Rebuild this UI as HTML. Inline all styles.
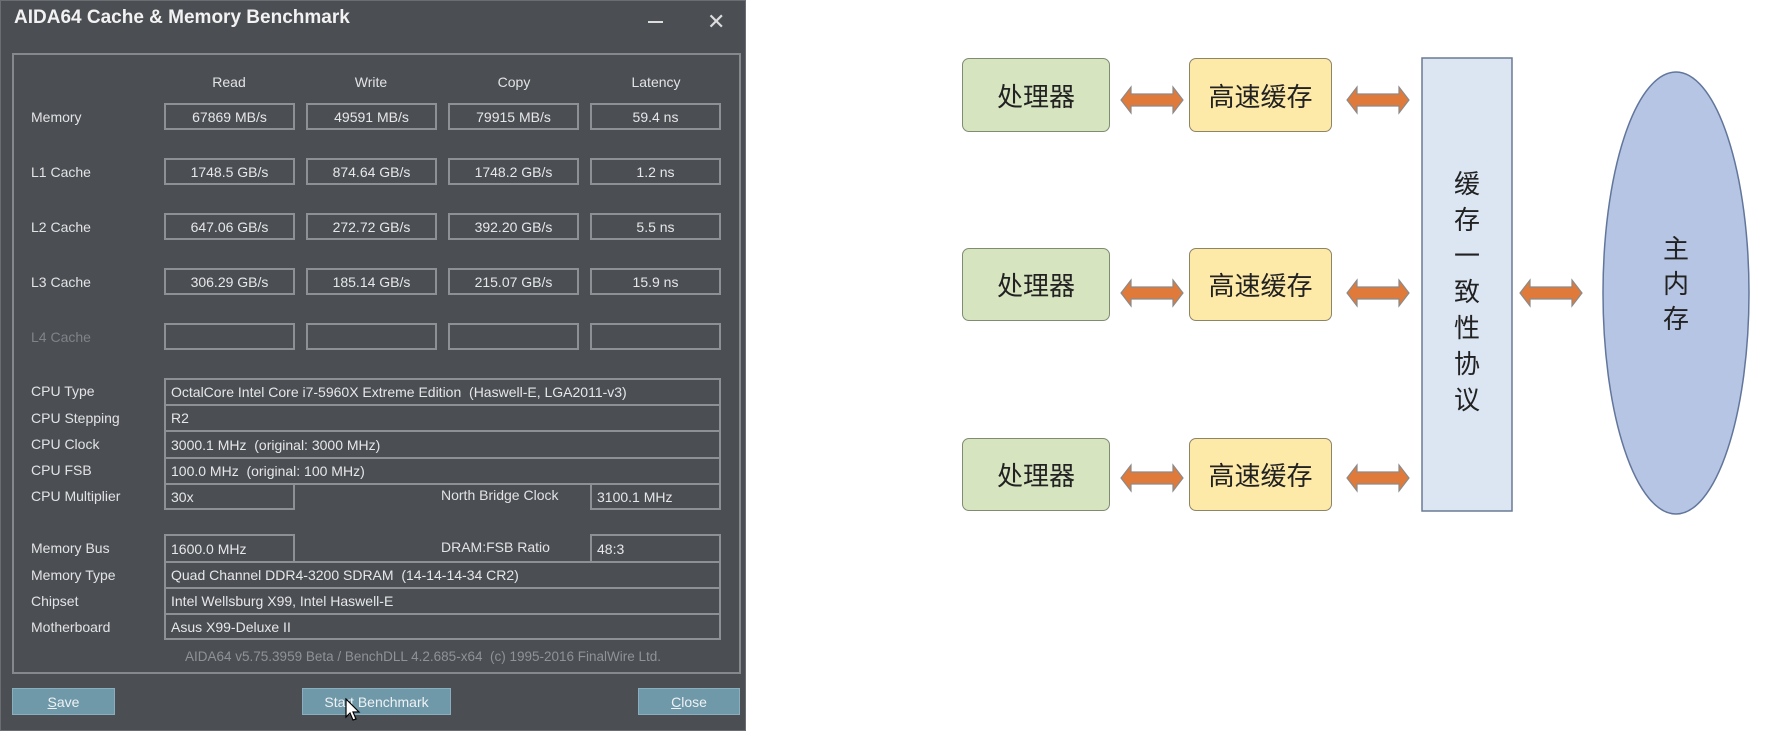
<!DOCTYPE html>
<html><head><meta charset="utf-8"><style>
*{margin:0;padding:0;box-sizing:border-box}
body{width:1776px;height:736px;background:#fff;position:relative;overflow:hidden;font-family:"Liberation Sans",sans-serif}
.a{position:absolute}
#win{left:0;top:0;width:746px;height:731px;background:#4b4e53;border:1px solid #6a6d72}
.t{color:#e2e3e5;font-size:14px;white-space:nowrap}
.lbl{position:absolute;left:30px;color:#e2e3e5;font-size:14px;transform:translateY(-50%)}
.box{position:absolute;border:2px solid #8d9094;color:#e6e7e9;font-size:14px;display:flex;align-items:center;justify-content:center;white-space:nowrap}
.fb{position:absolute;border:2px solid #8d9094;color:#e6e7e9;font-size:14px;display:flex;align-items:center;padding-left:5px;white-space:nowrap}
.hdr{position:absolute;top:73px;color:#e2e3e5;font-size:14px;transform:translateX(-50%)}
.btn{position:absolute;top:687px;height:27px;background:#6f98a9;border:1px solid #89aebd;color:#eef2f4;font-size:14px;display:flex;align-items:center;justify-content:center}
.cn{font-family:"Liberation Sans","Noto Sans CJK SC",sans-serif;color:#222}
.g{background:#d7e4c0;border:1.5px solid #7f8c72;border-radius:7px;display:flex;align-items:center;justify-content:center;font-size:26px}
.y{background:#fde9a8;border:1.5px solid #8e8466;border-radius:7px;display:flex;align-items:center;justify-content:center;font-size:26px}
</style></head><body>
<div id="win" class="a">
<div class="a" style="left:13px;top:6px;color:#f2f2f2;font-size:19px;font-weight:bold">AIDA64 Cache &amp; Memory Benchmark</div>
<div class="a" style="left:647px;top:20px;width:15px;height:2px;background:#ddd"></div>
<div class="a" style="left:706px;top:8px;color:#ddd;font-size:22px">✕</div>
<div class="a" style="left:11px;top:52px;width:729px;height:621px;border:2px solid #85888c"></div>
<div class="hdr" style="left:228px">Read</div>
<div class="hdr" style="left:370px">Write</div>
<div class="hdr" style="left:513px">Copy</div>
<div class="hdr" style="left:655px">Latency</div>

<div class="lbl" style="top:116px">Memory</div>
<div class="box" style="left:163px;top:102px;width:131px;height:27px">67869 MB/s</div>
<div class="box" style="left:305px;top:102px;width:131px;height:27px">49591 MB/s</div>
<div class="box" style="left:447px;top:102px;width:131px;height:27px">79915 MB/s</div>
<div class="box" style="left:589px;top:102px;width:131px;height:27px">59.4 ns</div>

<div class="lbl" style="top:171px">L1 Cache</div>
<div class="box" style="left:163px;top:157px;width:131px;height:27px">1748.5 GB/s</div>
<div class="box" style="left:305px;top:157px;width:131px;height:27px">874.64 GB/s</div>
<div class="box" style="left:447px;top:157px;width:131px;height:27px">1748.2 GB/s</div>
<div class="box" style="left:589px;top:157px;width:131px;height:27px">1.2 ns</div>

<div class="lbl" style="top:226px">L2 Cache</div>
<div class="box" style="left:163px;top:212px;width:131px;height:27px">647.06 GB/s</div>
<div class="box" style="left:305px;top:212px;width:131px;height:27px">272.72 GB/s</div>
<div class="box" style="left:447px;top:212px;width:131px;height:27px">392.20 GB/s</div>
<div class="box" style="left:589px;top:212px;width:131px;height:27px">5.5 ns</div>

<div class="lbl" style="top:281px">L3 Cache</div>
<div class="box" style="left:163px;top:267px;width:131px;height:27px">306.29 GB/s</div>
<div class="box" style="left:305px;top:267px;width:131px;height:27px">185.14 GB/s</div>
<div class="box" style="left:447px;top:267px;width:131px;height:27px">215.07 GB/s</div>
<div class="box" style="left:589px;top:267px;width:131px;height:27px">15.9 ns</div>

<div class="lbl" style="top:336px;color:#80838a">L4 Cache</div>
<div class="box" style="left:163px;top:322px;width:131px;height:27px"></div>
<div class="box" style="left:305px;top:322px;width:131px;height:27px"></div>
<div class="box" style="left:447px;top:322px;width:131px;height:27px"></div>
<div class="box" style="left:589px;top:322px;width:131px;height:27px"></div>

<div class="lbl" style="top:390px">CPU Type</div>
<div class="fb" style="left:163px;top:377px;width:557px;height:28px">OctalCore Intel Core i7-5960X Extreme Edition&nbsp; (Haswell-E, LGA2011-v3)</div>
<div class="lbl" style="top:417px">CPU Stepping</div>
<div class="fb" style="left:163px;top:403px;width:557px;height:28px">R2</div>
<div class="lbl" style="top:443px">CPU Clock</div>
<div class="fb" style="left:163px;top:429px;width:557px;height:29px">3000.1 MHz&nbsp; (original: 3000 MHz)</div>
<div class="lbl" style="top:469px">CPU FSB</div>
<div class="fb" style="left:163px;top:456px;width:557px;height:28px">100.0 MHz&nbsp; (original: 100 MHz)</div>
<div class="lbl" style="top:495px">CPU Multiplier</div>
<div class="fb" style="left:163px;top:482px;width:131px;height:27px">30x</div>
<div class="a t" style="left:440px;top:486px">North Bridge Clock</div>
<div class="fb" style="left:589px;top:482px;width:131px;height:27px">3100.1 MHz</div>

<div class="lbl" style="top:547px">Memory Bus</div>
<div class="fb" style="left:163px;top:533px;width:131px;height:29px">1600.0 MHz</div>
<div class="a t" style="left:440px;top:538px">DRAM:FSB Ratio</div>
<div class="fb" style="left:589px;top:533px;width:131px;height:29px">48:3</div>
<div class="lbl" style="top:574px">Memory Type</div>
<div class="fb" style="left:163px;top:560px;width:557px;height:28px">Quad Channel DDR4-3200 SDRAM&nbsp; (14-14-14-34 CR2)</div>
<div class="lbl" style="top:600px">Chipset</div>
<div class="fb" style="left:163px;top:586px;width:557px;height:28px">Intel Wellsburg X99, Intel Haswell-E</div>
<div class="lbl" style="top:626px">Motherboard</div>
<div class="fb" style="left:163px;top:612px;width:557px;height:27px">Asus X99-Deluxe II</div>
<div class="a" style="left:184px;top:648px;color:#8f9296;font-size:13.5px;white-space:nowrap">AIDA64 v5.75.3959 Beta / BenchDLL 4.2.685-x64&nbsp; (c) 1995-2016 FinalWire Ltd.</div>

<div class="btn" style="left:11px;width:103px"><u>S</u>ave</div>
<div class="btn" style="left:301px;width:149px">Start Benchmark</div>
<div class="btn" style="left:637px;width:102px"><u>C</u>lose</div>
<svg class="a" style="left:344px;top:697px" width="16" height="24" viewBox="0 0 16 24"><path d="M1 1 L1 19 L5 15 L8 22 L11 21 L8 14 L14 14 Z" fill="#fff" stroke="#000" stroke-width="1.2"/></svg>
</div>

<svg class="a" style="left:0;top:0" width="1776" height="736">
<defs><g id="ar"><path d="M0 0 L10 -13 L10 -6 L52 -6 L52 -13 L62 0 L52 13 L52 6 L10 6 L10 13 Z" fill="#e07a3a" stroke="#8a8a8a" stroke-width="1.2"/></g></defs>
<use href="#ar" x="1121" y="100"/><use href="#ar" x="1347" y="100"/>
<use href="#ar" x="1121" y="293"/><use href="#ar" x="1347" y="293"/>
<use href="#ar" x="1121" y="478"/><use href="#ar" x="1347" y="478"/>
<use href="#ar" x="1520" y="293"/>
<rect x="1422" y="58" width="90" height="453" fill="#dce6f2" stroke="#6a7a94" stroke-width="1.5"/>
<ellipse cx="1676" cy="293" rx="73" ry="221" fill="#b5c5e3" stroke="#62769c" stroke-width="1.5"/>
</svg>
<div class="a cn g" style="left:962px;top:58px;width:148px;height:74px">处理器</div>
<div class="a cn g" style="left:962px;top:248px;width:148px;height:73px">处理器</div>
<div class="a cn g" style="left:962px;top:438px;width:148px;height:73px">处理器</div>
<div class="a cn y" style="left:1189px;top:58px;width:143px;height:74px">高速缓存</div>
<div class="a cn y" style="left:1189px;top:248px;width:143px;height:73px">高速缓存</div>
<div class="a cn y" style="left:1189px;top:438px;width:143px;height:73px">高速缓存</div>
<div class="a cn" style="left:1451px;top:166px;width:32px;font-size:26px;line-height:36px;text-align:center">缓<br>存<br>一<br>致<br>性<br>协<br>议</div>
<div class="a cn" style="left:1660px;top:232px;width:32px;font-size:26px;line-height:35px;text-align:center">主<br>内<br>存</div>
</body></html>
